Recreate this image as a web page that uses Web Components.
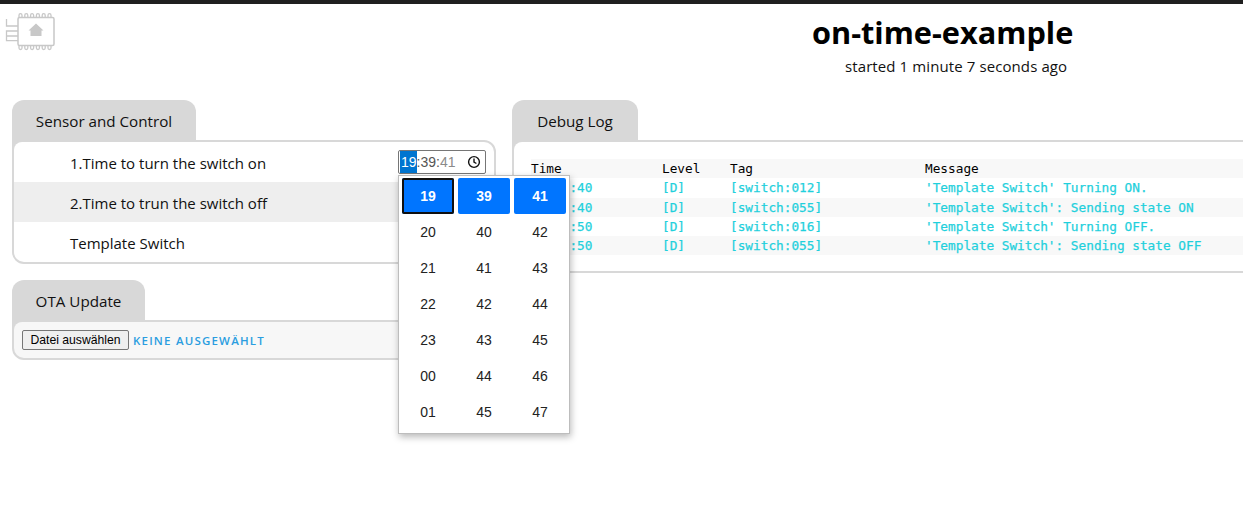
<!DOCTYPE html>
<html lang="de">
<head>
<meta charset="utf-8">
<title>on-time-example</title>
<style>
  html, body { margin: 0; height: 100%; overflow: hidden; background: #fff; }
  body { font-family: "Open Sans", "Noto Sans", sans-serif; color: #000; }
</style>
</head>
<body>
<esp-app>
  <esp-header slot="header" title-text="on-time-example" subtitle="started 1 minute 7 seconds ago"></esp-header>
  <div slot="left">
    <tab-panel label="Sensor and Control" tab-width="184">
      <entity-row label="1.Time to turn the switch on">
        <time-field value="19:39:41" open></time-field>
      </entity-row>
      <entity-row label="2.Time to trun the switch off" shaded></entity-row>
      <entity-row label="Template Switch"></entity-row>
    </tab-panel>
    <tab-panel label="OTA Update" tab-width="133" tinted>
      <ota-form></ota-form>
    </tab-panel>
  </div>
  <tab-panel slot="right" label="Debug Log" tab-width="126" cut>
    <debug-log></debug-log>
  </tab-panel>
</esp-app>

<script>
// Page frame: dark strip, header, two columns
class EspApp extends HTMLElement {
  constructor() {
    super();
    this.attachShadow({ mode: 'open' }).innerHTML = `
      <style>
        :host { display: block; border-top: 4px solid #1f1f1f; }
        .cols { display: flex; gap: 16px; padding: 0 0 0 12px; }
        .left { width: 484px; flex: none; }
        .right { flex: 1; min-width: 0; }
      </style>
      <slot name="header"></slot>
      <div class="cols">
        <div class="left"><slot name="left"></slot></div>
        <div class="right"><slot name="right"></slot></div>
      </div>`;
  }
}

class EspHeader extends HTMLElement {
  connectedCallback() {
    this.attachShadow({ mode: 'open' }).innerHTML = `
      <style>
        :host { display: flex; height: 96px; box-sizing: border-box; padding: 7px 0 0 5px; }
        svg { width: 52px; height: 40px; flex: none; margin-top: 1px; }
        .title { margin-left: 755px; }
        h1 { margin: 0; font: 700 30.7px/42px "Open Sans", sans-serif; white-space: nowrap; }
        p { margin: 2px 0 0 33px; font-size: 15px; letter-spacing: .1px; line-height: 22px; white-space: nowrap; color: #111; }
      </style>
      <svg viewBox="0 0 52 40" fill="none" stroke="#c8c8c8" stroke-width="1.3">
        <rect x="13" y="5.5" width="36" height="28" rx="1.5" stroke-width="1.5"/>
        <path d="M14 5V3.2a1.4 1.4 0 0 1 3 0V5M19.8 5V3.2a1.4 1.4 0 0 1 3 0V5M25.6 5V3.2a1.4 1.4 0 0 1 3 0V5M31.4 5V3.2a1.4 1.4 0 0 1 3 0V5M37.2 5V3.2a1.4 1.4 0 0 1 3 0V5M43 5V3.2a1.4 1.4 0 0 1 3 0V5"/>
        <path d="M14 34v2a1.4 1.4 0 0 0 3 0v-2M19.8 34v2a1.4 1.4 0 0 0 3 0v-2M25.6 34v2a1.4 1.4 0 0 0 3 0v-2M31.4 34v2a1.4 1.4 0 0 0 3 0v-2M37.2 34v2a1.4 1.4 0 0 0 3 0v-2M43 34v2a1.4 1.4 0 0 0 3 0v-2"/>
        <path d="M1.5 7V14H13M13 19H1.500V28.700H13M1.500 24H13"/>
        <path d="M31 11.500l7.500 7H36.500v5.500h-11v-5.500h-2z" fill="#c8c8c8" stroke="none"/>
      </svg>
      <div class="title">
        <h1>${this.getAttribute('title-text')}</h1>
        <p>${this.getAttribute('subtitle')}</p>
      </div>`;
  }
}

// Grey tab sitting on a rounded outlined box
class TabPanel extends HTMLElement {
  connectedCallback() {
    const cut = this.hasAttribute('cut');
    this.attachShadow({ mode: 'open' }).innerHTML = `
      <style>
        :host { display: block; margin-bottom: 16px; }
        .head { display: flex; height: 40px; }
        .tab {
          background: #d8d8d8; border-radius: 12px 12px 0 0; width: ${this.getAttribute('tab-width')}px;
          text-align: center; font-size: 15.200px; line-height: 43px; color: #111;
        }
        .box {
          border: 2px solid #d8d8d8; background: #d8d8d8;
          border-radius: ${cut ? '0 0 0 12px' : '0 12px 12px 12px'};
          ${cut ? 'border-right: 0;' : ''}
        }
        .inner {
          border-radius: ${cut ? '8px 0 0 10px' : '8px 10px 10px 10px'};
          background: ${this.hasAttribute('tinted') ? '#f7f7f7' : '#fff'};
        }
      </style>
      <div class="head"><div class="tab">${this.getAttribute('label')}</div></div>
      <div class="box"><div class="inner"><slot></slot></div></div>`;
  }
}

class EntityRow extends HTMLElement {
  connectedCallback() {
    this.attachShadow({ mode: 'open' }).innerHTML = `
      <style>
        :host { display: flex; align-items: center; justify-content: space-between; height: 40px; padding: 0 8px 0 56px; font-size: 15px; color: #111; }
        :host([shaded]) { background: #eee; }
        span { margin-top: 2px; }
      </style>
      <span>${this.getAttribute('label')}</span>
      <slot></slot>`;
  }
}

// Looks like the browser's time input, with its dropdown open
class TimeField extends HTMLElement {
  connectedCallback() {
    const [h, m, s] = this.getAttribute('value').split(':');
    this.attachShadow({ mode: 'open' }).innerHTML = `
      <style>
        :host { display: block; position: relative; width: 88px; height: 24px; box-sizing: border-box;
          border: 1px solid #767676; border-radius: 2px; background: #fff;
          font: 14px/22px "Liberation Sans", Arial, sans-serif; color: #555; padding: 0 0 0 1px; }
        .v { display: flex; }
        .sel { background: #0075d0; color: #fff; padding-left: 1px; }
        .dim { color: #8a8a8a; }
        svg { position: absolute; right: 4px; top: 4px; width: 14px; height: 14px; }
        time-popup { position: absolute; left: -1px; top: 24px; z-index: 5; }
      </style>
      <div class="v"><span class="sel">${h}</span>:${m}:<span class="dim">${s}</span></div>
      <svg viewBox="0 0 14 14" fill="none" stroke="#111" stroke-width="1.400">
        <circle cx="7" cy="7" r="5.400"/><path d="M7 3.600v3.600l2.400 1.300"/>
      </svg>
      <time-popup hours="19" minutes="39" seconds="41"></time-popup>`;
  }
}

class TimePopup extends HTMLElement {
  connectedCallback() {
    const hours = ['19', '20', '21', '22', '23', '00', '01'];
    const col = (start) => [0, 1, 2, 3, 4, 5, 6].map(i => String(start + i));
    const mins = col(+this.getAttribute('minutes'));
    const secs = col(+this.getAttribute('seconds'));
    let cells = '';
    hours.forEach((hr, i) => {
      [hr, mins[i], secs[i]].forEach((txt, j) => {
        const cls = i === 0 ? (j === 0 ? 'on focus' : 'on') : '';
        cells += `<div class="${cls}">${txt}</div>`;
      });
    });
    this.attachShadow({ mode: 'open' }).innerHTML = `
      <style>
        :host { display: grid; grid-template-columns: repeat(3, 52px); grid-auto-rows: 36px; column-gap: 4px;
          box-sizing: border-box; width: 172px; height: 259px; padding: 2px 3px 0 3px; background: #fff;
          border: 1px solid #bdbdbd; box-shadow: 1px 3px 7px rgba(0,0,0,.28);
          font: 14px "Liberation Sans", Arial, sans-serif; color: #222; }
        div { display: flex; align-items: center; justify-content: center; }
        .on { background: #0075ff; color: #fff; font-weight: 700; border-radius: 2px; }
        .focus { box-shadow: inset 0 0 0 2px #101010; }
      </style>
      ${cells}`;
  }
}

class OtaForm extends HTMLElement {
  connectedCallback() {
    this.attachShadow({ mode: 'open' }).innerHTML = `
      <style>
        :host { display: flex; align-items: center; height: 36px; padding-left: 8px; }
        button { font: 12.200px "Liberation Sans", Arial, sans-serif; height: 20px; width: 107px; padding: 0; margin-right: 4px;
          border: 1px solid #767676; border-radius: 2px; background: #efefef; color: #000; }
        span { font-size: 11.500px; font-weight: 600; letter-spacing: 1.200px; color: #2a9de0; }
      </style>
      <button>Datei auswählen</button><span>KEINE AUSGEWÄHLT</span>`;
  }
}

class DebugLog extends HTMLElement {
  connectedCallback() {
    const rows = [
      ['19:38:40', '[D]', '[switch:012]', "'Template Switch' Turning ON."],
      ['19:38:40', '[D]', '[switch:055]', "'Template Switch': Sending state ON"],
      ['19:38:50', '[D]', '[switch:016]', "'Template Switch' Turning OFF."],
      ['19:38:50', '[D]', '[switch:055]', "'Template Switch': Sending state OFF"],
    ];
    const line = (r, cls) => `<div class="row ${cls}">${r.map(c => `<span>${c}</span>`).join('')}</div>`;
    this.attachShadow({ mode: 'open' }).innerHTML = `
      <style>
        :host { display: block; padding: 17px 0 16px 17px; height: 96px;
          font: 12.750px/19px "DejaVu Sans Mono", monospace; }
        .row { display: grid; grid-template-columns: 131px 68px 195px 1fr; height: 19.250px; color: #1fd0dc; white-space: pre; -webkit-text-stroke: .25px #1fd0dc; }
        .head { color: #000; background: #f8f8f8; -webkit-text-stroke: 0; }
        .even { background: #f8f8f8; }
      </style>
      ${line(['Time', 'Level', 'Tag', 'Message'], 'head')}
      ${rows.map((r, i) => line(r, i % 2 ? 'even' : '')).join('')}`;
  }
}

customElements.define('esp-app', EspApp);
customElements.define('esp-header', EspHeader);
customElements.define('tab-panel', TabPanel);
customElements.define('entity-row', EntityRow);
customElements.define('time-field', TimeField);
customElements.define('time-popup', TimePopup);
customElements.define('ota-form', OtaForm);
customElements.define('debug-log', DebugLog);
</script>
</body>
</html>
